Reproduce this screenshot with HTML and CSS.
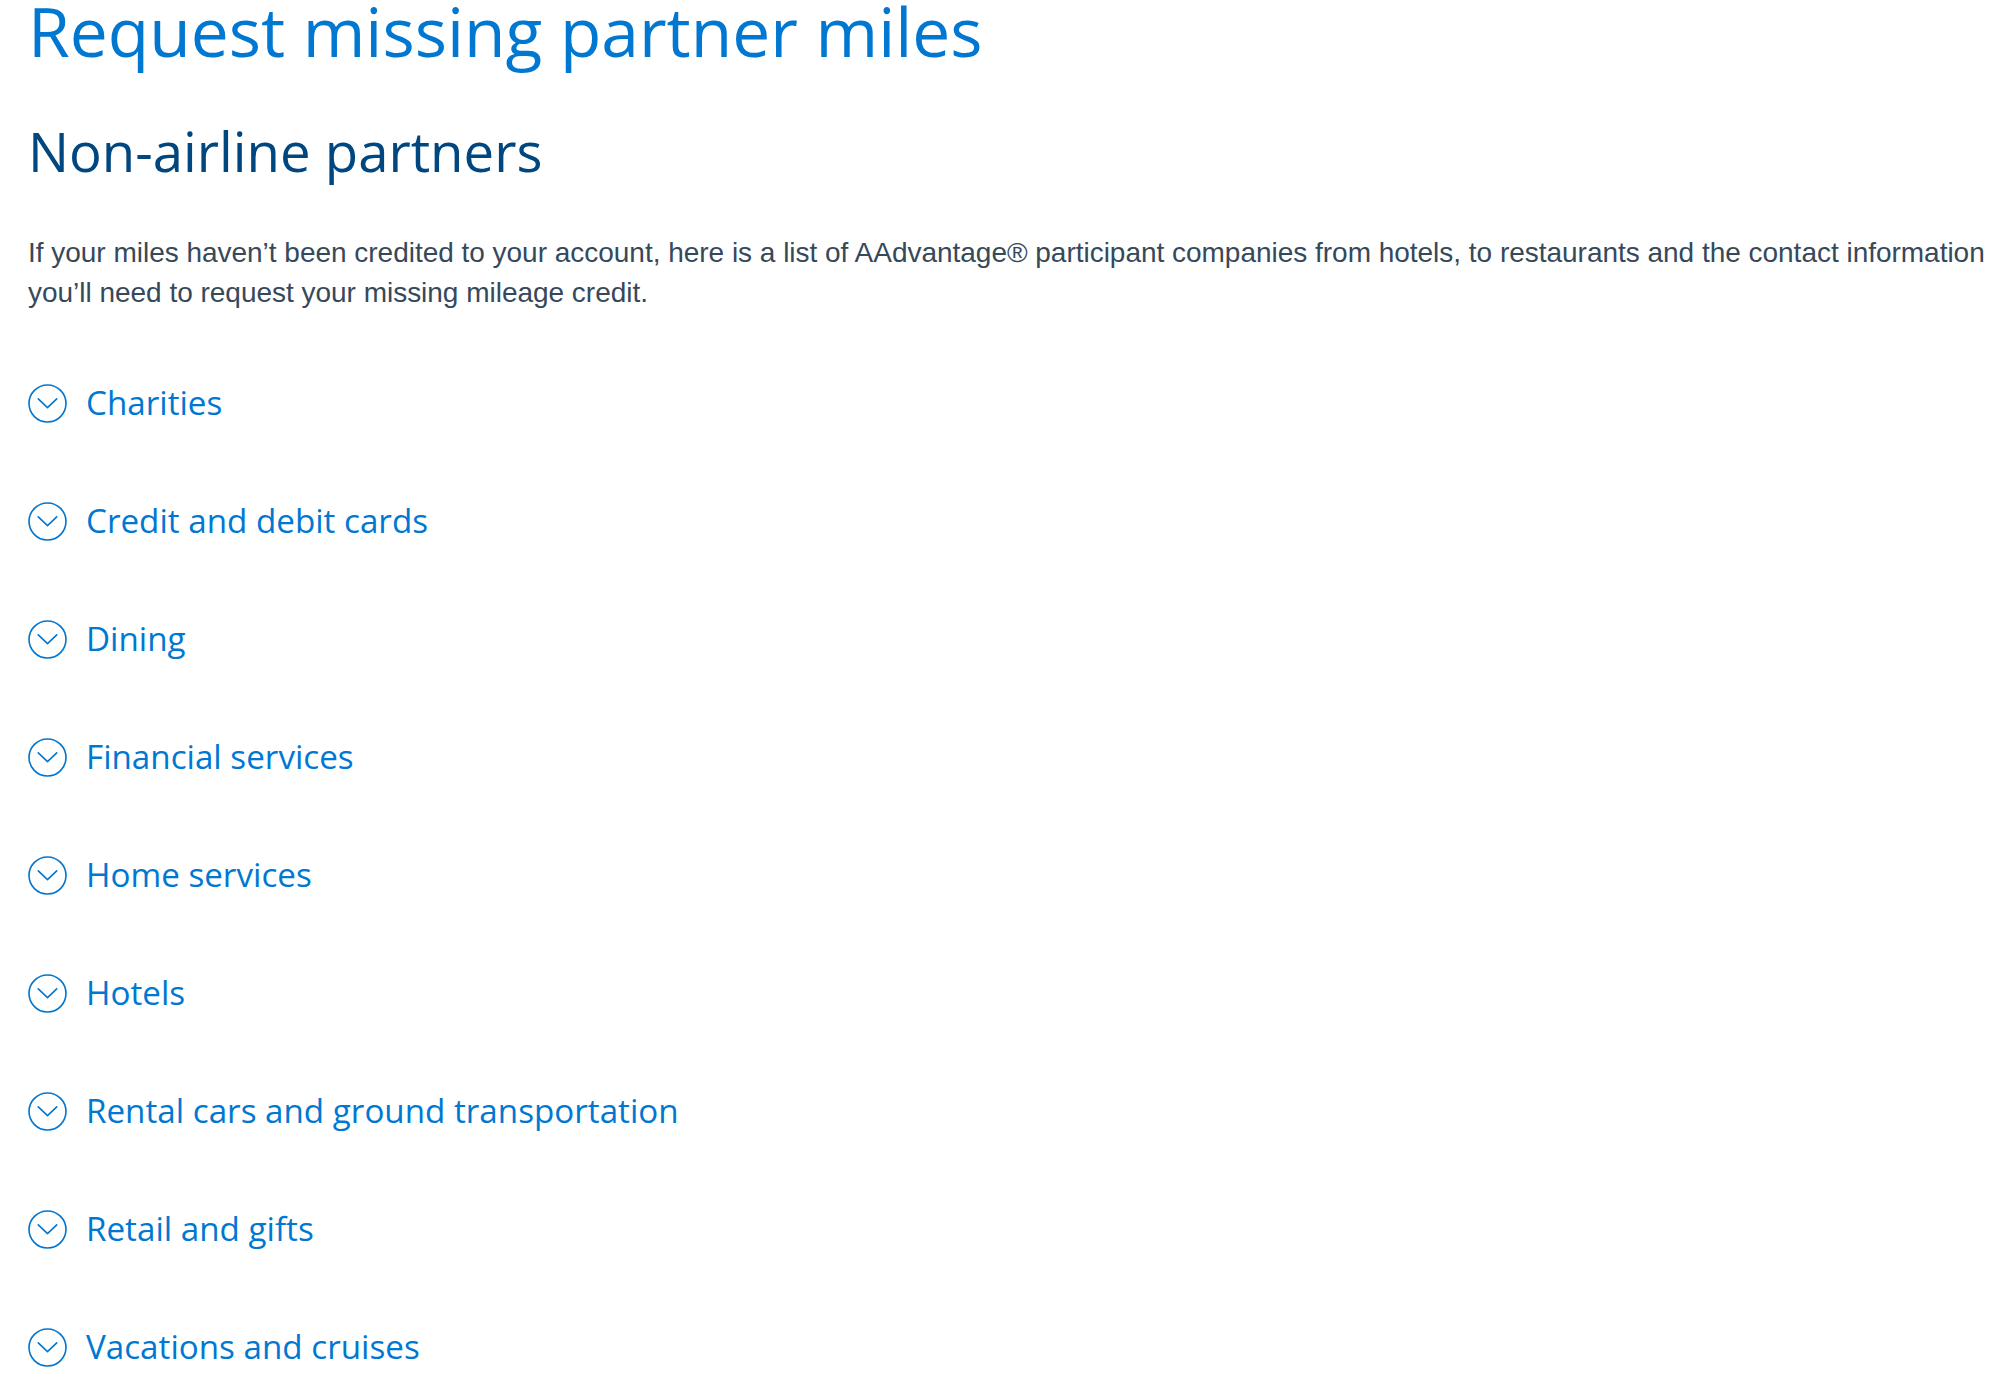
FILE: index.html
```html
<!DOCTYPE html>
<html lang="en">
<head>
<meta charset="utf-8">
<title>Request missing partner miles</title>
<link rel="stylesheet" href="styles.css">
</head>
<body>
<main class="page">
  <h1 class="page-title">Request missing partner miles</h1>
  <h2 class="section-title">Non-airline partners</h2>
  <p class="intro">If your miles haven’t been credited to your account, here is a list of AAdvantage® participant companies from hotels, to restaurants and the contact information you’ll need to request your missing mileage credit.</p>

  <ul class="accordion">
    <li class="accordion-item"><button class="accordion-toggle" type="button"><svg class="toggle-icon" viewBox="0 0 38 38" aria-hidden="true"><circle cx="19" cy="19" r="18"/><polyline points="10,14.5 19,23 28,14.5"/></svg><span class="toggle-label">Charities</span></button></li>
    <li class="accordion-item"><button class="accordion-toggle" type="button"><svg class="toggle-icon" viewBox="0 0 38 38" aria-hidden="true"><circle cx="19" cy="19" r="18"/><polyline points="10,14.5 19,23 28,14.5"/></svg><span class="toggle-label">Credit and debit cards</span></button></li>
    <li class="accordion-item"><button class="accordion-toggle" type="button"><svg class="toggle-icon" viewBox="0 0 38 38" aria-hidden="true"><circle cx="19" cy="19" r="18"/><polyline points="10,14.5 19,23 28,14.5"/></svg><span class="toggle-label">Dining</span></button></li>
    <li class="accordion-item"><button class="accordion-toggle" type="button"><svg class="toggle-icon" viewBox="0 0 38 38" aria-hidden="true"><circle cx="19" cy="19" r="18"/><polyline points="10,14.5 19,23 28,14.5"/></svg><span class="toggle-label">Financial services</span></button></li>
    <li class="accordion-item"><button class="accordion-toggle" type="button"><svg class="toggle-icon" viewBox="0 0 38 38" aria-hidden="true"><circle cx="19" cy="19" r="18"/><polyline points="10,14.5 19,23 28,14.5"/></svg><span class="toggle-label">Home services</span></button></li>
    <li class="accordion-item"><button class="accordion-toggle" type="button"><svg class="toggle-icon" viewBox="0 0 38 38" aria-hidden="true"><circle cx="19" cy="19" r="18"/><polyline points="10,14.5 19,23 28,14.5"/></svg><span class="toggle-label">Hotels</span></button></li>
    <li class="accordion-item"><button class="accordion-toggle" type="button"><svg class="toggle-icon" viewBox="0 0 38 38" aria-hidden="true"><circle cx="19" cy="19" r="18"/><polyline points="10,14.5 19,23 28,14.5"/></svg><span class="toggle-label">Rental cars and ground transportation</span></button></li>
    <li class="accordion-item"><button class="accordion-toggle" type="button"><svg class="toggle-icon" viewBox="0 0 38 38" aria-hidden="true"><circle cx="19" cy="19" r="18"/><polyline points="10,14.5 19,23 28,14.5"/></svg><span class="toggle-label">Retail and gifts</span></button></li>
    <li class="accordion-item"><button class="accordion-toggle" type="button"><svg class="toggle-icon" viewBox="0 0 38 38" aria-hidden="true"><circle cx="19" cy="19" r="18"/><polyline points="10,14.5 19,23 28,14.5"/></svg><span class="toggle-label">Vacations and cruises</span></button></li>
  </ul>
</main>
</body>
</html>
```

FILE: styles.css
```css
html {
  overflow: hidden;
}

body {
  margin: 0;
  background: #ffffff;
  font-family: "Open Sans", "Noto Sans", sans-serif;
}

.page {
  padding: 0 0 0 28px;
}

.page-title {
  margin: 0;
  font-size: 67.7px;
  line-height: 62px;
  font-weight: 400;
  color: #0078d2;
}

.section-title {
  margin: 57px 0 0;
  font-size: 54.5px;
  line-height: 64px;
  font-weight: 400;
  color: #00467f;
}

.intro {
  margin: 50px 0 0;
  font-family: "Liberation Sans", Arial, sans-serif;
  font-size: 28px;
  line-height: 40px;
  letter-spacing: -0.02px;
  color: #36495a;
}

.accordion {
  list-style: none;
  margin: 31px 0 0;
  padding: 0;
}

.accordion-item {
  height: 118px;
  display: flex;
  align-items: center;
}

.accordion-toggle {
  display: flex;
  align-items: center;
  gap: 19px;
  margin: 0;
  padding: 0;
  border: 0;
  background: none;
  cursor: pointer;
  font-family: "Open Sans", "Noto Sans", sans-serif;
  font-size: 33.2px;
  line-height: 44px;
  color: #0078d2;
}

.toggle-icon {
  width: 39px;
  height: 39px;
  flex: none;
  fill: none;
  stroke: #0078d2;
  stroke-width: 1.6;
  stroke-linecap: round;
  stroke-linejoin: round;
}
```
